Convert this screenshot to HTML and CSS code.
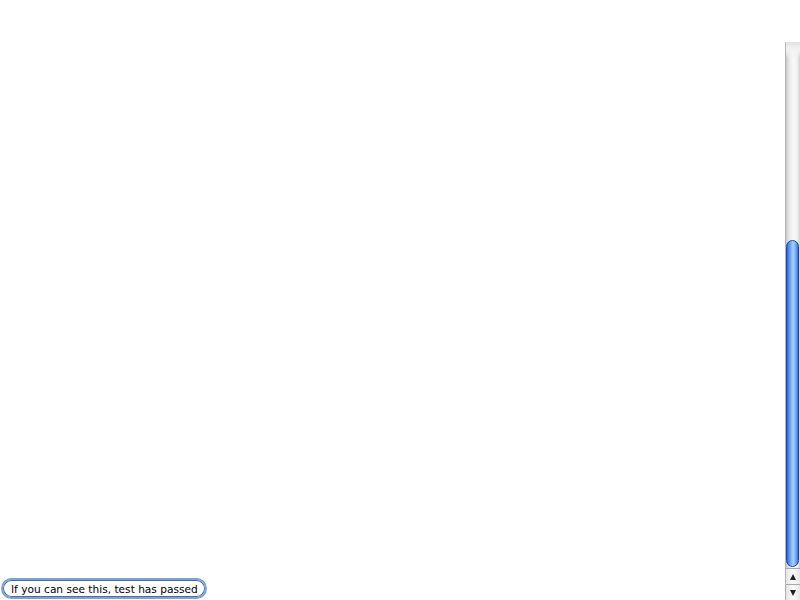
FILE: index.html
```html
<!DOCTYPE html>
<html>
<head>
<meta charset="utf-8">
<link rel="stylesheet" href="styles.css">
</head>
<body>
<div class="page">
  <div class="main">
    <div class="field">If you can see this, test has passed</div>
  </div>
  <div class="scrollbar">
    <div class="track">
      <div class="cap"></div>
      <div class="gap"></div>
      <div class="thumb"></div>
    </div>
    <div class="arrow up"><span class="tri-up"></span></div>
    <div class="arrow down"><span class="tri-down"></span></div>
  </div>
</div>
</body>
</html>
```
FILE: styles.css
```css
html, body { margin: 0; padding: 0; background: #fff; }
.page { display: flex; width: 800px; height: 600px; }
.main { flex: 1; display: flex; flex-direction: column; justify-content: flex-end; padding: 0 0 1px 1px; }
.field {
  width: 206px; height: 21px; box-sizing: border-box;
  border: 2px solid #7aa3dc; border-radius: 11px;
  box-shadow: inset 0 0 0 1px #4a6c9e;
  font-family: "DejaVu Sans", sans-serif; font-size: 10.6px; color: #000;
  padding-left: 8px; line-height: 18px; white-space: nowrap;
}
.scrollbar { width: 15px; padding-top: 42px; display: flex; flex-direction: column; box-sizing: border-box; }
.track { flex: 1; display: flex; flex-direction: column; border-left: 1px solid #b5b5b5;
  background: linear-gradient(to right, #c9c9c9, #e9e9e9 25%, #fafafa 55%, #f0f0f0 80%, #d0d0d0); }
.cap { height: 18px; background: linear-gradient(to bottom, #e2e2e2, #f3f3f3 40%, rgba(255,255,255,0)); border-radius: 0 0 50% 50% / 0 0 6px 6px; }
.gap { height: 180px; }
.thumb { flex: 1; margin: 0 1px 1px 0; border-radius: 7px; border: 1px solid #1f46a8;
  background: linear-gradient(to right, #2f63d8, #6fa6f2 30%, #a9d1fb 55%, #7fb5f6 75%, #3570de); }
.arrow { height: 16px; display: flex; align-items: center; justify-content: center; border-left: 1px solid #b5b5b5;
  background: linear-gradient(to right, #e3e3e3, #fbfbfb 50%, #e6e6e6); border-top: 1px solid #a8a8a8; box-sizing: border-box; }
.tri-up { width: 0; height: 0; border-left: 3.5px solid transparent; border-right: 3.5px solid transparent; border-bottom: 6px solid #222; }
.tri-down { width: 0; height: 0; border-left: 3.5px solid transparent; border-right: 3.5px solid transparent; border-top: 6px solid #222; }
```
